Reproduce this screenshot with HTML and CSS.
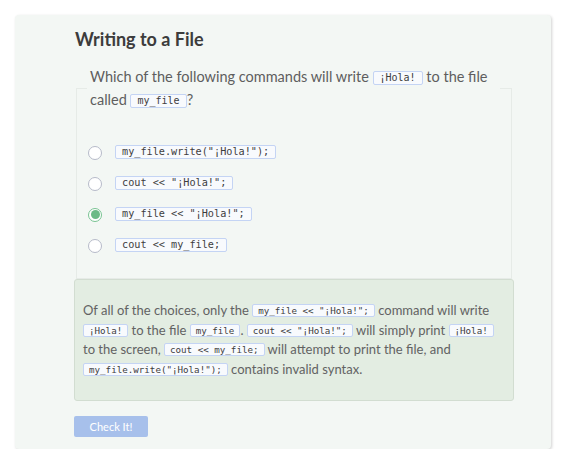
FILE: index.html
```html
<!DOCTYPE html>
<html lang="en">
<head>
<meta charset="utf-8">
<title>Writing to a File</title>
<link rel="stylesheet" href="styles.css">
</head>
<body>
<div class="card">
  <h1 class="title">Writing to a File</h1>
  <div class="question">
    <p class="prompt">Which of the following commands will write <code class="code">¡Hola!</code> to the file called <code class="code">my_file</code>?</p>
    <ul class="options">
      <li class="option"><span class="radio"></span><code class="code opt-code">my_file.write("¡Hola!");</code></li>
      <li class="option"><span class="radio"></span><code class="code opt-code">cout &lt;&lt; "¡Hola!";</code></li>
      <li class="option"><span class="radio checked"></span><code class="code opt-code">my_file &lt;&lt; "¡Hola!";</code></li>
      <li class="option"><span class="radio"></span><code class="code opt-code">cout &lt;&lt; my_file;</code></li>
    </ul>
  </div>
  <div class="feedback">
    <p class="feedback-text">Of all of the choices, only the <code class="code fb-code">my_file &lt;&lt; "¡Hola!";</code> command will write <code class="code fb-code">¡Hola!</code> to the file <code class="code fb-code">my_file</code>. <code class="code fb-code">cout &lt;&lt; "¡Hola!";</code> will simply print <code class="code fb-code">¡Hola!</code> to the screen, <code class="code fb-code">cout &lt;&lt; my_file;</code> will attempt to print the file, and <code class="code fb-code">my_file.write("¡Hola!");</code> contains invalid syntax.</p>
  </div>
  <button class="check" type="button">Check It!</button>
</div>
</body>
</html>
```

FILE: styles.css
```css
html, body {
  margin: 0;
  padding: 0;
  background: #ffffff;
}

body {
  font-family: "Lato", "Noto Sans", sans-serif;
}

.card {
  box-sizing: border-box;
  width: 536px;
  margin: 15px 0 0 15px;
  padding: 13px 37px 12px 59px;
  background: #f3f7f4;
  border-radius: 4px;
  box-shadow: 1px 1px 3px rgba(0, 0, 0, 0.18);
}

.title {
  margin: 0 0 0 1px;
  font-size: 18px;
  line-height: 22px;
  font-weight: 700;
  color: #3c3c3c;
}

.question {
  margin: 38px 2px 0;
  border: 1px solid #e6ebe7;
  padding: 0 0 18px;
}

.prompt {
  margin: -24px 11px 0 10px;
  padding: 0 3px;
  background: #f3f7f4;
  font-size: 14.5px;
  line-height: 23px;
  color: #5e5e5e;
}

.code {
  display: inline-block;
  font-family: "DejaVu Sans Mono", "Liberation Mono", monospace;
  font-size: 10px;
  line-height: 12px;
  padding: 0 6px;
  color: #3d3d3d;
  background: #f8fafd;
  border: 1px solid #c4d4f4;
  border-radius: 2px;
  vertical-align: 1px;
}

.options {
  list-style: none;
  margin: 25px 0 0;
  padding: 0;
}

.option {
  display: flex;
  align-items: center;
  height: 31px;
}

.radio {
  box-sizing: border-box;
  width: 14px;
  height: 14px;
  margin: 2px 13px 0 11px;
  border: 1px solid #b6bac9;
  border-radius: 50%;
  background: #ffffff;
  display: flex;
  align-items: center;
  justify-content: center;
}

.radio.checked {
  border-color: #78c392;
}

.radio.checked::after {
  content: "";
  width: 9px;
  height: 9px;
  border-radius: 50%;
  background: #6bba86;
}

.opt-code {
  font-size: 10.2px;
}

.feedback {
  padding: 21px 8px 21px;
  background: #e3ede2;
  border: 1px solid #d2ddd1;
  border-radius: 3px;
}

.feedback-text {
  margin: 0;
  font-size: 13px;
  line-height: 19.5px;
  color: #626262;
}

.fb-code {
  font-size: 9.2px;
  line-height: 11px;
  padding: 0 5px;
}

.check {
  display: block;
  margin-top: 15px;
  width: 74px;
  height: 21px;
  padding: 0;
  border: none;
  border-radius: 2px;
  background: #a7c0eb;
  color: #ffffff;
  font-family: "Lato", "Noto Sans", sans-serif;
  font-size: 11px;
}
```
